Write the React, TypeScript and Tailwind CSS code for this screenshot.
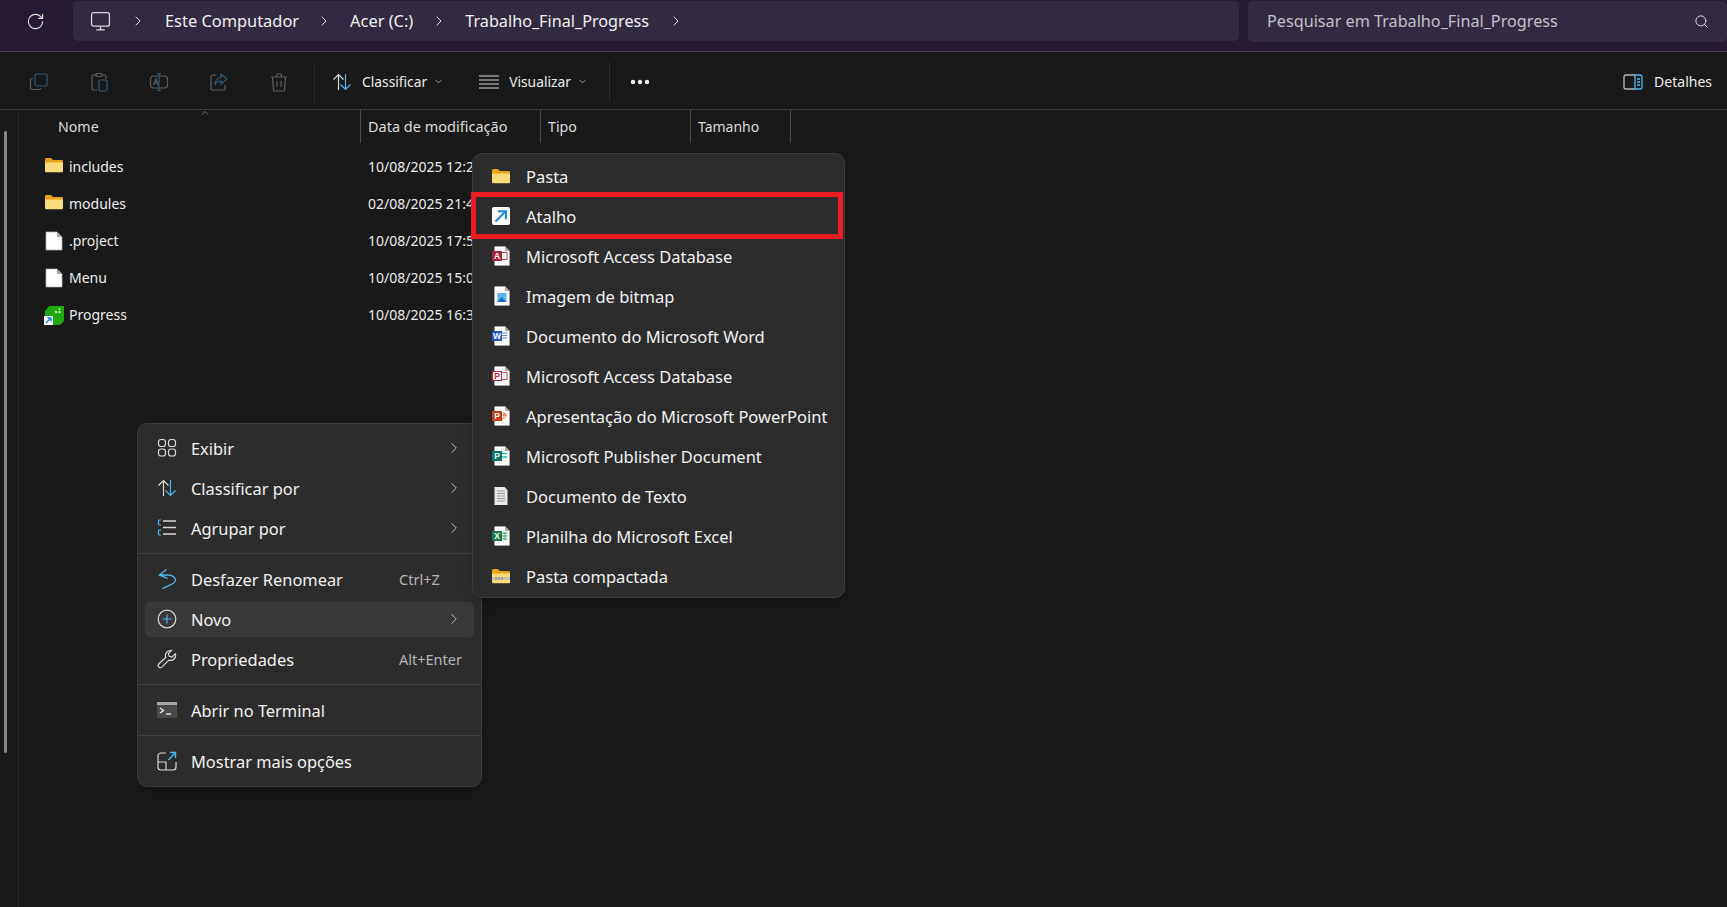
import { ChevronDown, ChevronRight, ChevronUp, Ellipsis, RotateCw, Search } from 'lucide-react';
import type { ReactNode } from 'react';

const FONT = "font-['Noto_Sans',sans-serif]";

function Folder({ className = 'h-[18px] w-[18px]' }: { className?: string }) {
  return (
    <svg viewBox="0 0 18 18" className={className}>
      <path d="M0 3.500C0 2.700.6 2 1.400 2h4.400l2.200 2h8.600c.8 0 1.400.6 1.400 1.400V8H0z" fill="#e8a416" />
      <path d="M0 6.500h16.600c.8 0 1.400.6 1.400 1.400v7c0 .8-.6 1.400-1.400 1.400H1.400C.6 16.300 0 15.700 0 14.900z" fill="#fbdc7c" />
    </svg>
  );
}

function BlankFile() {
  return (
    <svg viewBox="0 0 18 20" className="h-5 w-[18px]">
      <path d="M1 1h11l5 5v13H1z" fill="#fff" stroke="#b5b5b5" strokeWidth=".7" />
      <path d="M12 1v5h5z" fill="#a8a8a8" />
    </svg>
  );
}

function ProgressIcon() {
  return (
    <svg viewBox="0 0 20 20" className="h-5 w-5">
      <path d="M5 1h15v15l-4 4H1V6z" fill="#1fa80f" />
      <circle cx="12" cy="7" r="1.200" fill="#bfeeb5" />
      <circle cx="15.500" cy="7" r="1.200" fill="#bfeeb5" />
      <circle cx="15.500" cy="4" r="1" fill="#bfeeb5" />
      <rect x="0" y="11" width="9" height="9" fill="#fff" />
      <path d="M2 18l4.400-4.400M3.400 13h3.600v3.600" stroke="#1683d8" strokeWidth="1.400" fill="none" />
    </svg>
  );
}

function ShortcutIcon() {
  return (
    <svg viewBox="0 0 18 18" className="h-[18px] w-[18px]">
      <rect width="18" height="18" rx="2" fill="#fbfbfb" />
      <path d="M3.500 14.500L13 5M6 4.200h8v8" stroke="#1a8ae0" strokeWidth="2" fill="none" />
    </svg>
  );
}

function DocIcon({ color, letter, outline, children }: { color: string; letter: string; outline?: boolean; children?: ReactNode }) {
  return (
    <svg viewBox="0 0 18 20" className="h-5 w-[18px]">
      <path d="M2.500.5h10.500l4.500 4.500v14.500H2.500z" fill="#fbfbfb" stroke="#aaa" strokeWidth=".6" />
      <path d="M13 .5V5h4.500z" fill="#a8a8a8" />
      {children}
      <rect x={outline ? 0.5 : 0} y={outline ? 5.5 : 5} width={outline ? 9 : 10} height={outline ? 9 : 10} fill={outline ? '#fbfbfb' : color} stroke={outline ? color : 'none'} />
      <text x="5" y="13" textAnchor="middle" fontSize="8.500" fontWeight="700" fontFamily="Liberation Sans" fill={outline ? color : '#fff'}>
        {letter}
      </text>
    </svg>
  );
}

function BitmapIcon() {
  return (
    <svg viewBox="0 0 18 20" className="h-5 w-[18px]">
      <path d="M2.500.5h10.500l4.500 4.500v14.500H2.500z" fill="#fbfbfb" stroke="#aaa" strokeWidth=".6" />
      <path d="M13 .5V5h4.500z" fill="#a8a8a8" />
      <rect x="5.500" y="7" width="9" height="9" fill="#5cb4ee" />
      <path d="M5.500 16l4-5 5 5z" fill="#1f6fc4" />
    </svg>
  );
}

function TextFileIcon() {
  return (
    <svg viewBox="0 0 18 20" className="h-5 w-[18px]">
      <path d="M2.500 1h10l3 3v15h-13z" fill="#e9e9e9" />
      <path d="M5 5h8M5 7.500h8M5 10h8M5 12.500h8M5 15h8" stroke="#8f8f8f" strokeWidth=".9" />
    </svg>
  );
}

function ZipIcon() {
  return (
    <svg viewBox="0 0 18 18" className="h-[18px] w-[18px]">
      <path d="M0 3.500C0 2.700.6 2 1.400 2h4.400l2.200 2h8.600c.8 0 1.400.6 1.400 1.400V8H0z" fill="#e8a416" />
      <path d="M0 6.500h18v8.500c0 .8-.6 1.300-1.400 1.300H1.400C.6 16.300 0 15.800 0 15z" fill="#fbdc7c" />
      <path d="M0 10h18v3H0z" fill="#c9c4b4" />
      <path d="M4 10v3M7 10v3M10 10v3" stroke="#7f7a68" strokeWidth="1" />
    </svg>
  );
}

const WHITE = '#d8d8d8';
const BLUE = '#4cb6ee';

function ToolbarIcon({ kind }: { kind: number }) {
  const dim = '#5d5d5d';
  const tint = '#2d5a78';
  return (
    <svg viewBox="0 0 20 20" className="h-5 w-5" fill="none" strokeWidth="1.200">
      {kind === 0 && (
        <>
          <path d="M4 6.500H3a1.500 1.500 0 0 0-1.500 1.500v8A1.500 1.500 0 0 0 3 17.500h7a1.500 1.500 0 0 0 1.500-1.500" stroke={dim} />
          <rect x="6" y="2" width="12" height="12" rx="2" stroke={tint} />
        </>
      )}
      {kind === 1 && (
        <>
          <path d="M8 3H4.500A1.500 1.500 0 0 0 3 4.500v12A1.500 1.500 0 0 0 4.500 18H8M12 3h3.500A1.500 1.500 0 0 1 17 4.500V7" stroke={dim} />
          <rect x="7" y="1.500" width="6" height="3" rx="1" stroke={dim} />
          <rect x="10" y="8" width="8" height="11" rx="1.500" stroke={tint} />
        </>
      )}
      {kind === 2 && (
        <>
          <rect x="1.500" y="4" width="17" height="12" rx="3" stroke={dim} />
          <path d="M10 1.500v17M8 1.500h4M8 18.500h4" stroke={tint} />
          <path d="M4.500 13l2.500-6 2 6M5.500 11h3" stroke={dim} />
        </>
      )}
      {kind === 3 && (
        <>
          <path d="M7 3H4a2 2 0 0 0-2 2v11a2 2 0 0 0 2 2h10a2 2 0 0 0 2-2v-3" stroke={dim} />
          <path d="M12 2l6 5-6 5V9C9 9 7 10.500 6 13c0-4 2.500-7 6-7.500z" stroke={tint} />
        </>
      )}
      {kind === 4 && (
        <>
          <path d="M2 5h16M7.500 5V3a1 1 0 0 1 1-1h3a1 1 0 0 1 1 1v2M3.500 5l1 13a1 1 0 0 0 1 1h9a1 1 0 0 0 1-1l1-13" stroke={dim} />
          <path d="M8 9v6M12 9v6" stroke={dim} />
        </>
      )}
    </svg>
  );
}

function SortArrows() {
  return (
    <svg viewBox="0 0 20 20" className="h-5 w-5" fill="none" strokeWidth="1.200">
      <path d="M6.500 18V2.500M1.500 7.500l5-5 5 5" stroke={WHITE} />
      <path d="M13.500 2v15.500M8.500 12.500l5 5 5-5" stroke={BLUE} />
    </svg>
  );
}

function MenuIcon({ kind }: { kind: string }) {
  return (
    <svg viewBox="0 0 20 20" className="h-5 w-5" fill="none" strokeWidth="1.200">
      {kind === 'grid' && (
        <>
          <rect x="1.500" y="1.500" width="7" height="7" rx="2.500" stroke={WHITE} />
          <rect x="11.500" y="1.500" width="7" height="7" rx="2.500" stroke={WHITE} />
          <rect x="1.500" y="11" width="7" height="7" rx="2.500" stroke={WHITE} />
          <rect x="11.500" y="11" width="7" height="7" rx="2.500" stroke={WHITE} />
        </>
      )}
      {kind === 'group' && (
        <>
          <path d="M6 3h13M6 9.500h13M6 16h13" stroke={WHITE} strokeWidth="1.300" />
          <path d="M4 2H2.500A1 1 0 0 0 1.500 3v3a1 1 0 0 0 1 1H4M4 12H2.500a1 1 0 0 0-1 1v3a1 1 0 0 0 1 1H4" stroke={BLUE} />
        </>
      )}
      {kind === 'undo' && (
        <path d="M9.600.5L2.300 6l8.300 3.300M2.300 6H11c4.500 0 7.500 2.500 7.500 5.500S11 17 5.500 19.500" stroke={BLUE} strokeWidth="1.300" />
      )}
      {kind === 'plus' && (
        <>
          <circle cx="10" cy="10" r="8.800" stroke={WHITE} />
          <path d="M10 5.500v9M5.500 10h9" stroke={BLUE} />
        </>
      )}
      {kind === 'wrench' && (
        <path
          d="M13.500 1.500a5 5 0 0 0-4.700 6.800L1.800 15a2.200 2.200 0 0 0 3.100 3.100l6.900-7a5 5 0 0 0 6.500-6.300l-3.300 3.300-2.800-.8-.8-2.800 3.200-3.200a5 5 0 0 0-.6 0z"
          stroke={WHITE}
        />
      )}
      {kind === 'terminal' && (
        <>
          <rect x="0" y="2" width="20" height="16" fill="#4a4a4a" />
          <rect x="0" y="2" width="20" height="3" fill="#a6a6a6" />
          <path d="M3 8l3.500 2.500L3 13" stroke="#e8e8e8" strokeWidth="1.400" />
          <path d="M9 14h5" stroke="#e8e8e8" strokeWidth="1.400" />
        </>
      )}
      {kind === 'more' && (
        <>
          <path d="M9 2H4a3 3 0 0 0-3 3v11a3 3 0 0 0 3 3h12a3 3 0 0 0 3-3v-5M1.500 11H9v8" stroke={WHITE} />
          <path d="M11.500 9L18.500 1.500M13 1.500h5.500V7" stroke={BLUE} strokeWidth="1.400" />
        </>
      )}
    </svg>
  );
}

type ContextRow = { icon: string; label: string; shortcut?: string; arrow?: boolean; active?: boolean };

const contextGroups: ContextRow[][] = [
  [
    { icon: 'grid', label: 'Exibir', arrow: true },
    { icon: 'sort', label: 'Classificar por', arrow: true },
    { icon: 'group', label: 'Agrupar por', arrow: true },
  ],
  [
    { icon: 'undo', label: 'Desfazer Renomear', shortcut: 'Ctrl+Z' },
    { icon: 'plus', label: 'Novo', arrow: true, active: true },
    { icon: 'wrench', label: 'Propriedades', shortcut: 'Alt+Enter' },
  ],
  [{ icon: 'terminal', label: 'Abrir no Terminal' }],
  [{ icon: 'more', label: 'Mostrar mais opções' }],
];

function ContextMenu() {
  return (
    <div className="absolute left-[137px] top-[423px] w-[345px] rounded-[10px] border border-[#3b3b3b] bg-[#2c2c2c] pt-1 pb-[5px] shadow-lg">
      {contextGroups.map((group, i) => (
        <div key={i} className={i > 0 ? 'mt-[5px] border-t border-[#404040] pt-[5px]' : ''}>
          {group.map((row) => (
            <div key={row.label} className="relative flex h-10 items-center px-[19px]">
              {row.active && <div className="absolute inset-x-[7px] top-[3px] bottom-[2px] rounded-[5px] bg-[#383838]" />}
              <span className="relative mr-[14px]">{row.icon === 'sort' ? <SortArrows /> : <MenuIcon kind={row.icon} />}</span>
              <span className="relative flex-1 pt-[2px] text-[16.400px] whitespace-nowrap text-[#f2f2f2]">{row.label}</span>
              {row.shortcut && <span className="relative w-[63px] pt-[2px] text-[14.500px] whitespace-nowrap text-[#b4b4b4]">{row.shortcut}</span>}
              {row.arrow && <ChevronRight className="relative -mr-[1px] h-[18px] w-[18px] text-[#bdbdbd]" strokeWidth={1.3} />}
            </div>
          ))}
        </div>
      ))}
    </div>
  );
}

const newItems: { label: string; icon: ReactNode }[] = [
  { label: 'Pasta', icon: <Folder /> },
  { label: 'Atalho', icon: <ShortcutIcon /> },
  {
    label: 'Microsoft Access Database',
    icon: (
      <DocIcon color="#a4273a" letter="A">
        <path d="M10 6.500h5v7h-5" stroke="#c2405a" fill="none" />
      </DocIcon>
    ),
  },
  { label: 'Imagem de bitmap', icon: <BitmapIcon /> },
  {
    label: 'Documento do Microsoft Word',
    icon: (
      <DocIcon color="#1f57b8" letter="W">
        <path d="M10 7h5M10 9.500h5M10 12h5" stroke="#5a8ad8" />
      </DocIcon>
    ),
  },
  {
    label: 'Microsoft Access Database',
    icon: (
      <DocIcon color="#b3283c" letter="P" outline>
        <path d="M10 6.500h5v7h-5" stroke="#c2405a" fill="none" />
      </DocIcon>
    ),
  },
  {
    label: 'Apresentação do Microsoft PowerPoint',
    icon: (
      <DocIcon color="#c43e1c" letter="P">
        <path d="M11 6.500a4 4 0 0 1 4 4h-4z" fill="#f08a60" />
        <path d="M10 11.500h4a4 4 0 0 1-4 2z" fill="#f0a080" />
      </DocIcon>
    ),
  },
  {
    label: 'Microsoft Publisher Document',
    icon: (
      <DocIcon color="#077568" letter="P">
        <path d="M10 7.500h5M10 11h5" stroke="#2bb8c0" strokeWidth="1.600" />
      </DocIcon>
    ),
  },
  { label: 'Documento de Texto', icon: <TextFileIcon /> },
  {
    label: 'Planilha do Microsoft Excel',
    icon: (
      <DocIcon color="#1e7a45" letter="X">
        <path d="M10 7h5.500M10 10h5.500M10 13h5.500M13 6v8" stroke="#3fa56e" />
      </DocIcon>
    ),
  },
  { label: 'Pasta compactada', icon: <ZipIcon /> },
];

function NewMenu() {
  return (
    <div className="absolute left-[472px] top-[153px] w-[373px] rounded-[10px] border border-[#3b3b3b] bg-[#2c2c2c] pt-[2px] pb-px shadow-lg">
      {newItems.map((item, i) => (
        <div key={i} className="flex h-10 items-center pl-[18px]">
          <span className="mr-[15px] flex w-[20px] justify-center">{item.icon}</span>
          <span className="pt-[2px] text-[16.500px] whitespace-nowrap text-[#f2f2f2]">{item.label}</span>
        </div>
      ))}
      <div className="absolute left-[-2px] top-[38px] h-[47px] w-[372px] border-[5px] border-[#ed1c24]" />
    </div>
  );
}

const files = [
  { name: 'includes', date: '10/08/2025 12:2', icon: <Folder />, raise: true },
  { name: 'modules', date: '02/08/2025 21:4', icon: <Folder />, raise: true },
  { name: '.project', date: '10/08/2025 17:5', icon: <BlankFile /> },
  { name: 'Menu', date: '10/08/2025 15:0', icon: <BlankFile /> },
  { name: 'Progress', date: '10/08/2025 16:3', icon: <ProgressIcon /> },
];

export default function App() {
  return (
    <div className={`relative h-[907px] w-[1727px] overflow-hidden bg-[#191919] text-white ${FONT}`}>
      <div className="flex h-[52px] items-start gap-[9px] border-b border-[#444] bg-[#261b33] pt-px pl-[26px]">
        <RotateCw className="mt-[11px] mr-[19px] h-[19px] w-[19px] text-[#e6e6e6]" strokeWidth={1.4} />
        <div className="flex h-10 flex-1 items-center rounded-[5px] bg-[#322a40] pl-[17px] text-[16.400px] text-[#f0f0f0]">
          <svg viewBox="0 0 20 20" className="mr-[19px] h-[21px] w-[21px]" fill="none" stroke="#d8d8d8" strokeWidth="1.200">
            <rect x="1.500" y="1.500" width="17" height="13" rx="2" />
            <path d="M6 18h8M10 14.500V18" />
          </svg>
          <ChevronRight className="mr-[19px] h-4 w-4 text-[#dcdcdc]" strokeWidth={1.5} />
          <span>Este Computador</span>
          <ChevronRight className="mr-[18px] ml-[17px] h-4 w-4 text-[#dcdcdc]" strokeWidth={1.5} />
          <span>Acer (C:)</span>
          <ChevronRight className="mx-[18px] h-4 w-4 text-[#dcdcdc]" strokeWidth={1.5} />
          <span className="text-[16.200px]">Trabalho_Final_Progress</span>
          <ChevronRight className="ml-[19px] h-4 w-4 text-[#dcdcdc]" strokeWidth={1.5} />
        </div>
        <div className="flex h-[41px] w-[479px] items-center justify-between rounded-[5px] bg-[#322a40] pr-[18px] pl-[19px] text-[16.200px] text-[#c4c0c8]">
          <span>Pesquisar em Trabalho_Final_Progress</span>
          <Search className="h-[15px] w-[15px] text-[#e6e6e6]" strokeWidth={1.5} />
        </div>
      </div>

      <div className="flex h-[58px] items-center border-b border-[#3a3a3a] pt-[2px] pr-[15px] pl-[29px] text-[13.800px] text-[#ececec]">
        <div className="flex gap-[40px] pr-[25px]">
          {[0, 1, 2, 3, 4].map((k) => (
            <ToolbarIcon key={k} kind={k} />
          ))}
        </div>
        <div className="h-10 w-px bg-[#2c2c2c]" />
        <div className="ml-[17px] flex items-center">
          <SortArrows />
          <span className="ml-[10px] pt-[2px]">Classificar</span>
          <ChevronDown className="ml-[6px] h-[11px] w-[11px] text-[#c8c8c8]" strokeWidth={1.5} />
        </div>
        <div className="ml-[35px] flex items-center">
          <svg viewBox="0 0 20 20" className="h-5 w-5" fill="none" stroke="#d8d8d8" strokeWidth="1.200">
            <path d="M0 4h20M0 8h20M0 12h20M0 16h20" />
          </svg>
          <span className="ml-[10px] pt-[2px]">Visualizar</span>
          <ChevronDown className="ml-[6px] h-[11px] w-[11px] text-[#c8c8c8]" strokeWidth={1.5} />
        </div>
        <div className="ml-[21px] h-10 w-px bg-[#2c2c2c]" />
        <Ellipsis className="ml-[18px] h-6 w-6 text-[#f0f0f0]" strokeWidth={2.4} />
        <div className="ml-auto flex items-center">
          <svg viewBox="0 0 20 16" className="h-[16px] w-[20px]" fill="none" strokeWidth="1.300">
            <path d="M12 1H3a2 2 0 0 0-2 2v10a2 2 0 0 0 2 2h9" stroke="#b8b8b8" />
            <path d="M12 1h5a2 2 0 0 1 2 2v10a2 2 0 0 1-2 2h-5zM14 5h3M14 8h3M14 11h3" stroke={BLUE} />
          </svg>
          <span className="ml-[11px] text-[14px]">Detalhes</span>
        </div>
      </div>

      <div className="flex h-[797px]">
        <div className="w-[19px] shrink-0 border-r border-[#2a2a2a] pt-[21px] pl-1">
          <div className="h-[622px] w-[3px] rounded-full bg-[#8a8a8a]" />
        </div>
        <div className="flex-1">
          <div className="relative flex h-[33px] text-[14.200px] text-[#dcdcdc]">
            <div className="relative w-[342px] border-r border-[#4a4a4a] pt-[6px] pl-[39px]">
              Nome
              <ChevronUp className="absolute -top-[3px] left-[180px] h-3 w-3 text-[#a8a8a8]" strokeWidth={1.2} />
            </div>
            <div className="w-[180px] border-r border-[#4a4a4a] pt-[6px] pl-[7px] text-[14.500px]">Data de modificação</div>
            <div className="w-[150px] border-r border-[#4a4a4a] pt-[6px] pl-[7px]">Tipo</div>
            <div className="w-[100px] border-r border-[#4a4a4a] pt-[6px] pl-[7px] text-[14px]">Tamanho</div>
          </div>
          <div className="pt-[5px]">
            {files.map((f) => (
              <div key={f.name} className="flex h-[37px] items-center text-[14px] text-[#ececec]">
                <span className={`ml-[25px] flex w-5 justify-center ${f.raise ? '-mt-[3px]' : ''}`}>{f.icon}</span>
                <span className="ml-[5px] w-[299px]">{f.name}</span>
                <span className="whitespace-nowrap">{f.date}</span>
              </div>
            ))}
          </div>
        </div>
      </div>

      <ContextMenu />
      <NewMenu />
    </div>
  );
}
